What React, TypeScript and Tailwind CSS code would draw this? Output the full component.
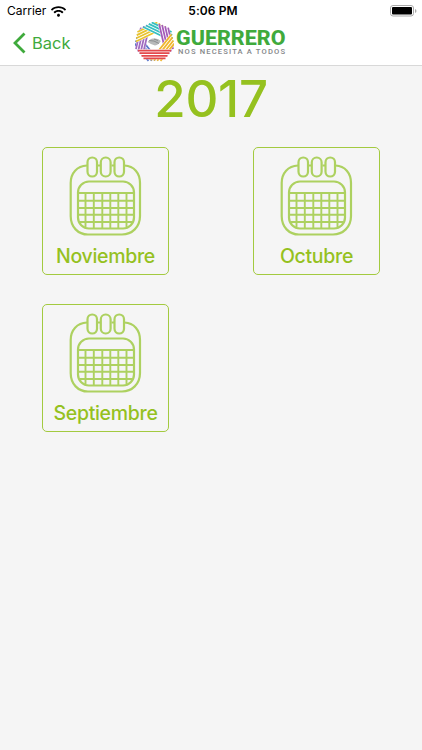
import { FaWifi } from 'react-icons/fa'

const months = ['Noviembre', 'Octubre', 'Septiembre']

// each band of the emblem is the same striped shape turned around the centre
const bands = [
  { angle: 51.43, color: '#5b78cc' },
  { angle: 102.86, color: '#a06cc0' },
  { angle: 154.29, color: '#e9c32f' },
  { angle: 205.71, color: '#35bfc0' },
  { angle: 257.14, color: '#a45cb8' },
  { angle: 308.57, color: '#f0b62f' },
  { angle: 0, color: '#e4484c' },
]

function Emblem() {
  return (
    <svg className="h-[40px] w-[39px]" viewBox="-0.5 -0.5 40 41" fill="none">
      {bands.map((band) => (
        <g key={band.angle} transform={`rotate(${band.angle} 19.5 20)`}>
          <path d="M2.5 27.5H36.5L29.5 37.8H9.5Z" fill="#fff" />
          <path
            d="M2.5 28.8H36.5M4.3 31.5H34.7M6.2 34.2H32.8M8.2 36.9H30.8"
            stroke={band.color}
            strokeWidth="1.8"
          />
        </g>
      ))}
      <path d="M12.5 20q3-4.5 7-3.5 4-.5 6.5 2.5-2 4-6 4.5-3.5-.5-7.5-3.5" fill="#b8babb" />
      <path d="M14 18.5l5 .5 5 2.5M19 17l4 1.5" stroke="#888c8e" />
    </svg>
  )
}

function CalendarIcon() {
  return (
    <svg
      className="h-[81px] w-[73px]"
      viewBox="0 0 73 81"
      fill="none"
      stroke="#add160"
      strokeWidth="2.2">
      <path d="M18 9.5C8 10 1.7 17 1.7 27V60C1.7 71 9 78.5 19 78.5H53C63 78.5 71 71 71 60V27C71 17 65 10 55.5 9.5" />
      <path d="M28.5 9.5H32M42.5 9.5H45.5" />
      <rect x="18.5" y="1.5" width="9.5" height="19" rx="4.7" />
      <rect x="31.8" y="1.5" width="9.8" height="19" rx="4.8" />
      <rect x="45.5" y="1.5" width="9.5" height="19" rx="4.7" />
      <rect x="9" y="25.5" width="56" height="47" rx="11" />
      <path
        d="M9 37H65M9 44.7H65M9 52H65M9 58.7H65M11 66H63M16.5 37V71M24.8 37V72M33.3 37V72M41.3 37V72M49.3 37V72M57.5 37V71"
        strokeWidth="1.9"
      />
    </svg>
  )
}

export default function App() {
  return (
    <div className="h-[750px] w-[422px] bg-[#f5f5f5] font-['Inter','Liberation_Sans',sans-serif]">
      <header className="h-[66px] border-b border-[#d8d8d8] bg-white">
        <div className="grid h-[22px] grid-cols-3 items-center text-[12px] leading-none text-black">
          <div className="flex items-center gap-[5px] pl-[7px]">
            <span>Carrier</span>
            <FaWifi className="h-[13px] w-[15px]" />
          </div>
          <div className="pl-1 text-center font-semibold tracking-[0.1px]">5:06 PM</div>
          <div className="flex items-center justify-end pr-[5px]">
            <svg className="h-[12px] w-[27px]" viewBox="0 0 27 12">
              <rect x="0.5" y="0.5" width="23" height="10.5" rx="2.5" fill="none" stroke="#aaa" />
              <rect x="2" y="2" width="20" height="7.5" rx="1" />
              <path d="M25 4v4q1.5-.7 1.5-2T25 4" fill="#aaa" />
            </svg>
          </div>
        </div>
        <div className="flex h-[43px] items-start text-[#3faa3c]">
          <div className="flex w-[135px] items-center gap-[6px] pt-[10px] pl-[13px]">
            <svg className="h-[22px] w-[13px]" viewBox="0 0 13 22" fill="none" stroke="currentColor" strokeWidth="2.8">
              <path d="M11.5 1.5L2 11L11.5 20.5" />
            </svg>
            <span className="text-[16.5px] leading-[22px]">Back</span>
          </div>
          <Emblem />
          <svg className="h-[43px] w-[114px] font-['Roboto',sans-serif]" viewBox="0 0 114 43">
            <text x="2" y="22.5" fontSize="20" fontWeight="800" textLength="109.5" lengthAdjust="spacingAndGlyphs" fill="currentColor">
              GUERRERO
            </text>
            <text x="4" y="32" fontSize="7.6" fontWeight="500" textLength="107" fill="#85878a">
              NOS NECESITA A TODOS
            </text>
          </svg>
        </div>
      </header>

      <main>
        <h1 className="pt-[7px] text-center text-[51px] leading-[52px] font-medium tracking-[-0.3px] text-[#95c11f]">
          2017
        </h1>
        <div className="mt-[22px] grid grid-cols-2 gap-y-[29px]">
          {months.map((month) => (
            <div
              key={month}
              className="mx-auto flex h-[128px] w-[127px] flex-col items-center rounded-[5px] border border-[#a3ca3f] pt-[8px]">
              <CalendarIcon />
              <span className="mt-[6px] text-[19.5px] leading-[26px] font-medium tracking-[-0.3px] text-[#95c11f]">
                {month}
              </span>
            </div>
          ))}
        </div>
      </main>
    </div>
  )
}
